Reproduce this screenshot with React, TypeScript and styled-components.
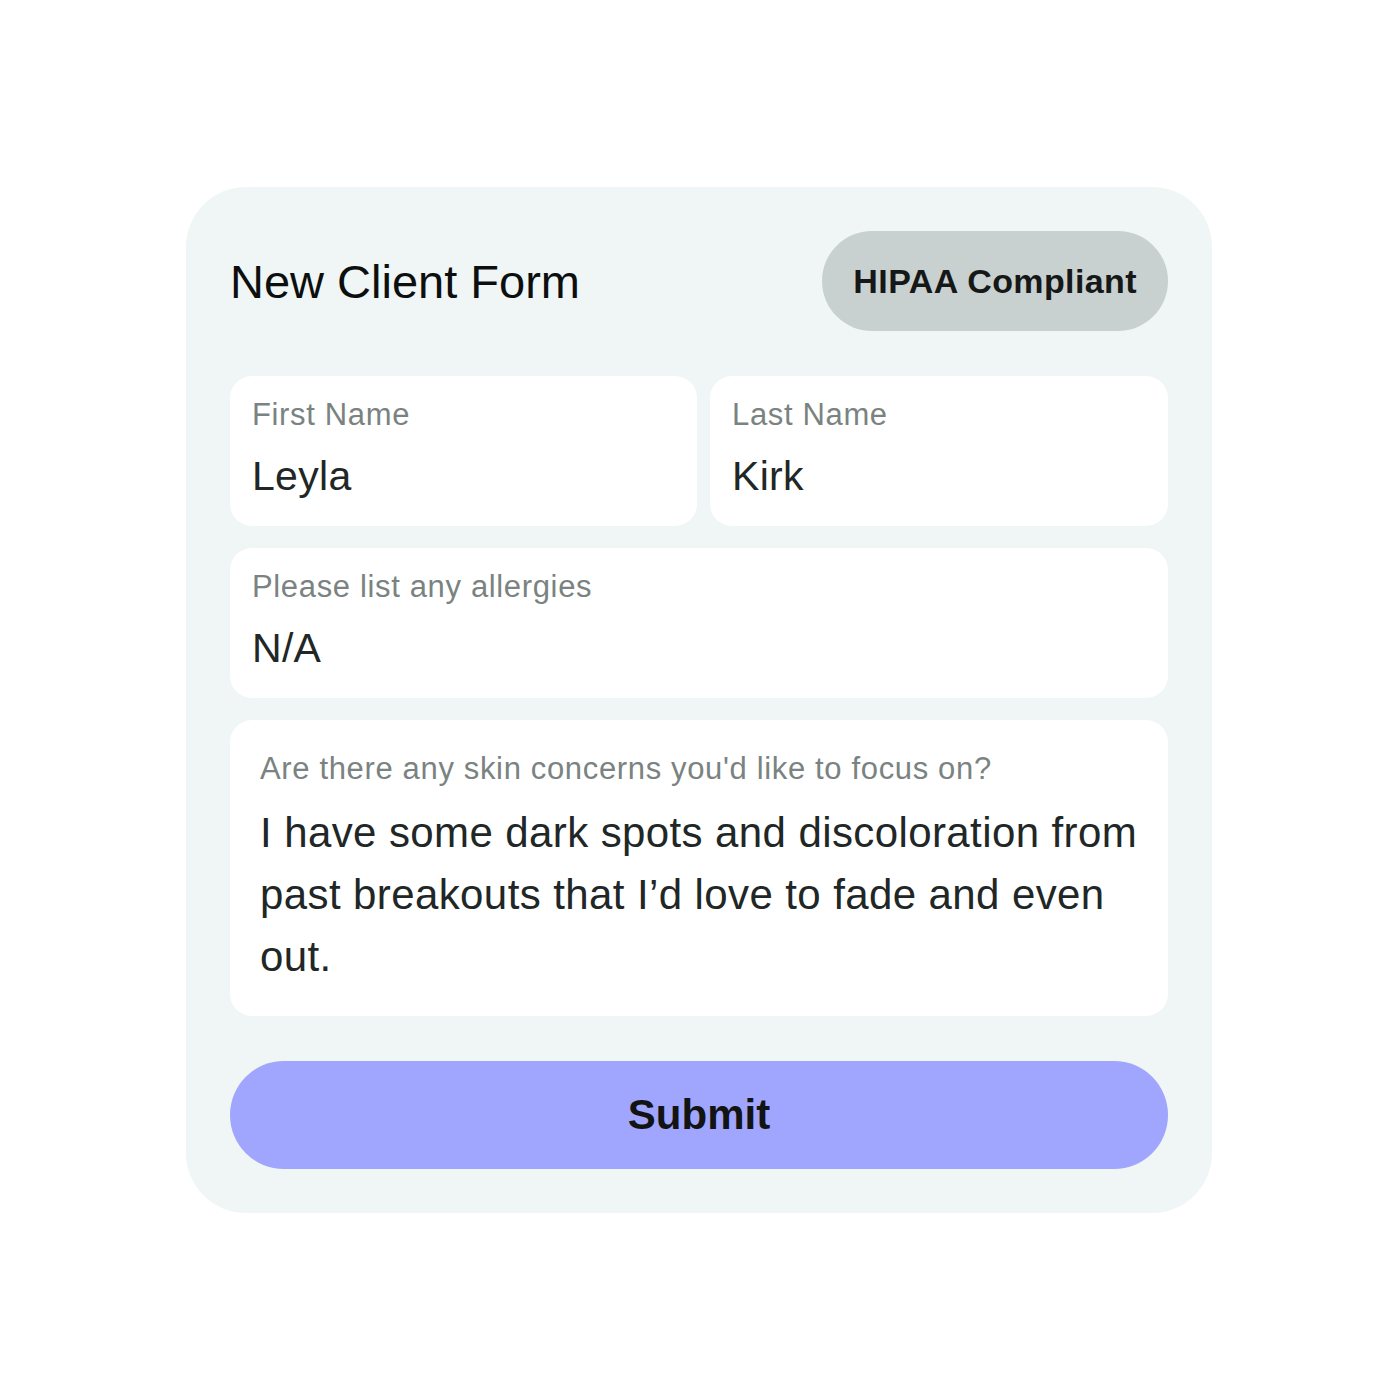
import React from 'react';
import styled, { createGlobalStyle } from 'styled-components';

const GlobalStyle = createGlobalStyle`
  body {
    margin: 0;
    background: #ffffff;
    font-family: 'Liberation Sans', Arial, sans-serif;
  }
`;

const Page = styled.div`
  display: flex;
  align-items: center;
  justify-content: center;
  min-height: 1400px;
  padding-right: 2px;
`;

const Card = styled.form`
  box-sizing: border-box;
  width: 1026px;
  padding: 44px;
  border-radius: 60px;
  background: #eff6f5;
  display: flex;
  flex-direction: column;
`;

const Header = styled.div`
  display: flex;
  align-items: center;
  justify-content: space-between;
  height: 100px;
  margin-bottom: 45px;
`;

const Title = styled.h1`
  margin: 0;
  font-size: 47px;
  font-weight: 400;
  color: #0d0f0f;
`;

const Badge = styled.span`
  display: flex;
  align-items: center;
  height: 100px;
  padding: 0 31px;
  border-radius: 50px;
  background: #c9d0d0;
  font-size: 34px;
  font-weight: 700;
  letter-spacing: 0.4px;
  color: #161818;
`;

const Fields = styled.div`
  display: grid;
  grid-template-columns: 467fr 458fr;
  gap: 22px 13px;
`;

const Field = styled.label<{ $wide?: boolean; $roomy?: boolean }>`
  box-sizing: border-box;
  grid-column: ${(p) => (p.$wide ? '1 / -1' : 'auto')};
  display: flex;
  flex-direction: column;
  gap: ${(p) => (p.$roomy ? '14px' : '17px')};
  padding: ${(p) => (p.$roomy ? '30px 30px 28px' : '20px 22px 25px')};
  border-radius: 22px;
  background: #ffffff;
`;

const Label = styled.span`
  font-size: 31px;
  line-height: 38px;
  letter-spacing: 0.65px;
  color: #7a8381;
`;

const Value = styled.span<{ $body?: boolean }>`
  font-size: ${(p) => (p.$body ? '42px' : '41px')};
  line-height: ${(p) => (p.$body ? '62px' : '50px')};
  letter-spacing: ${(p) => (p.$body ? '0.4px' : '0.3px')};
  color: #212726;
`;

const Submit = styled.button`
  margin-top: 45px;
  height: 108px;
  border: none;
  border-radius: 54px;
  background: #a0a5fd;
  font-family: inherit;
  font-size: 42px;
  font-weight: 700;
  color: #121414;
  cursor: pointer;
`;

const App: React.FC = () => {
  return (
    <Page>
      <GlobalStyle />
      <Card onSubmit={(e) => e.preventDefault()}>
        <Header>
          <Title>New Client Form</Title>
          <Badge>HIPAA Compliant</Badge>
        </Header>
        <Fields>
          <Field>
            <Label>First Name</Label>
            <Value>Leyla</Value>
          </Field>
          <Field>
            <Label>Last Name</Label>
            <Value>Kirk</Value>
          </Field>
          <Field $wide>
            <Label>Please list any allergies</Label>
            <Value>N/A</Value>
          </Field>
          <Field $wide $roomy>
            <Label>Are there any skin concerns you'd like to focus on?</Label>
            <Value $body>
              I have some dark spots and discoloration from past breakouts that I’d love to fade and even out.
            </Value>
          </Field>
        </Fields>
        <Submit type="submit">Submit</Submit>
      </Card>
    </Page>
  );
};

export default App;
